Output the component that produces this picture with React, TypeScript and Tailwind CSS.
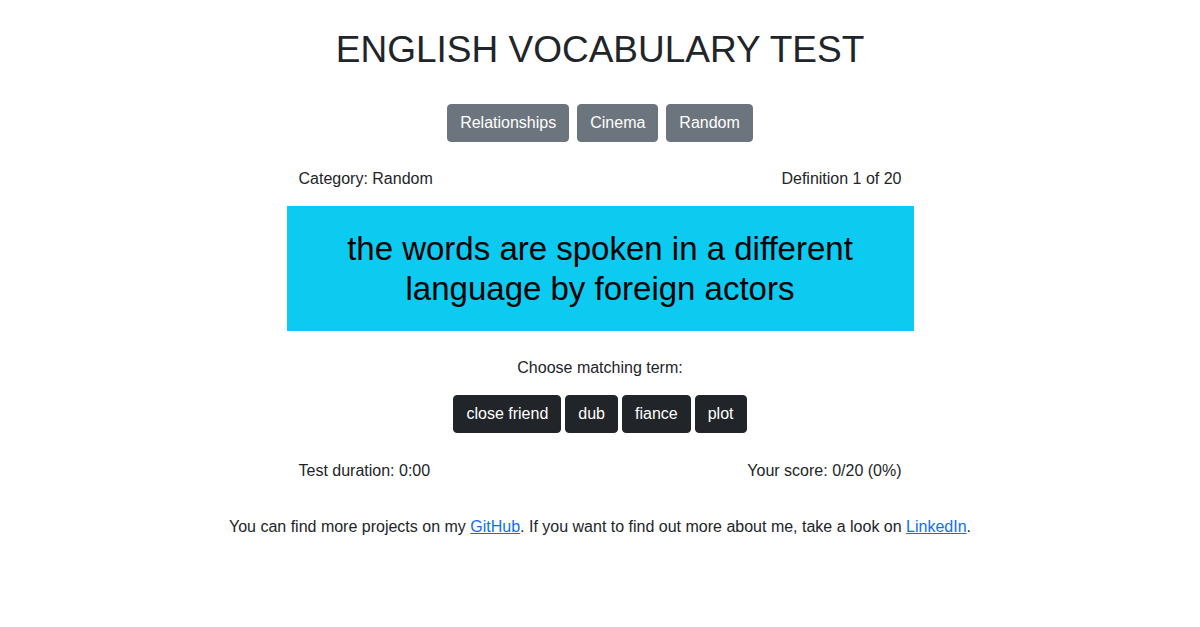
import React from "react";

export default function App() {
  const cats = ["Relationships", "Cinema", "Random"];
  const terms = ["close friend", "dub", "fiance", "plot"];
  return (
    <div
      className="min-h-[627px] w-full bg-white text-[#212529] text-[16px] leading-[24px] flex flex-col items-center"
      style={{ fontFamily: '"Liberation Sans", Arial, sans-serif' }}
    >
      <h1 className="mt-[26px] text-[37px] leading-[48px] font-normal text-center">
        ENGLISH VOCABULARY TEST
      </h1>
      <div className="mt-[30px] flex gap-2">
        {cats.map((c) => (
          <button
            key={c}
            className="h-[38px] px-[12px] rounded-[4px] bg-[#6c757d] text-white border border-[#6c757d]"
          >
            {c}
          </button>
        ))}
      </div>
      <div className="w-[627px] mt-[25px] flex flex-col">
        <div className="flex justify-between px-3">
          <span>Category: Random</span>
          <span>Definition 1 of 20</span>
        </div>
        <div className="mt-[15px] h-[125px] bg-[#0dcaf0] text-black flex items-center justify-center px-6">
          <p className="text-[33px] leading-[40px] text-center">
            the words are spoken in a different language by foreign actors
          </p>
        </div>
        <div className="mt-[25px] text-center">Choose matching term:</div>
        <div className="mt-[15px] flex justify-center gap-1">
          {terms.map((t) => (
            <button
              key={t}
              className="h-[38px] px-[12px] rounded-[4px] bg-[#212529] text-white border border-[#212529]"
            >
              {t}
            </button>
          ))}
        </div>
        <div className="mt-[26px] flex justify-between px-3">
          <span>Test duration: 0:00</span>
          <span>Your score: 0/20 (0%)</span>
        </div>
      </div>
      <p className="mt-[32px] text-center">
        You can find more projects on my{" "}
        <a href="#" className="text-[#0d6efd] underline">
          GitHub
        </a>
        . If you want to find out more about me, take a look on{" "}
        <a href="#" className="text-[#0d6efd] underline">
          LinkedIn
        </a>
        .
      </p>
    </div>
  );
}
